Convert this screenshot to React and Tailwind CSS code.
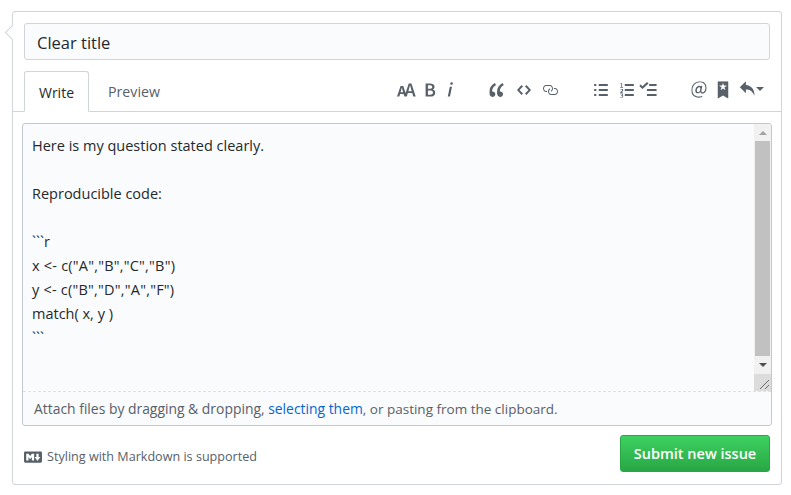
import React from "react";

const Icon = ({ w, h = 16, d, className = "" }) => (
  <svg width={w} height={h} viewBox={`0 0 ${w} 16`} className={`block fill-[#586069] ${className}`}>
    <path fillRule="evenodd" d={d} />
  </svg>
);

const textSize = "M13.62 9.08L12.1 3.66h-.06l-1.5 5.42h3.08zM5.7 10.13S4.68 6.52 4.53 6.02h-.08l-1.13 4.11H5.7zM17.31 14h-2.25l-.95-3.25h-4.07L9.09 14H6.84l-.69-2.33H2.87L2.17 14H0l3.3-9.59h2.5l2.17 6.34L10.86 2h2.52l3.93 12z";
const bold = "M1 2h3.83c2.48 0 4.3.75 4.3 2.95 0 1.14-.63 2.23-1.67 2.61v.06c1.33.3 2.3 1.23 2.3 2.86 0 2.39-1.97 3.52-4.61 3.52H1V2zm3.66 4.95c1.67 0 2.38-.66 2.38-1.69 0-1.17-.78-1.61-2.34-1.61H3.13v3.3h1.53zm.27 5.39c1.77 0 2.75-.64 2.75-1.98 0-1.27-.95-1.81-2.75-1.81h-1.8v3.8h1.8v-.01z";
const italic = "M2.81 5h1.98L3 14H1l1.81-9zm.36-2.7c0-.7.58-1.3 1.33-1.3.56 0 1.13.38 1.13 1.03 0 .75-.59 1.3-1.33 1.3-.58 0-1.13-.38-1.13-1.03z";
const quote = "M6.16 3.5C3.73 5.06 2.55 6.67 2.55 9.36c.16-.05.3-.05.44-.05 1.27 0 2.5.86 2.5 2.41 0 1.61-1.03 2.61-2.5 2.61-1.9 0-2.99-1.52-2.99-4.25 0-3.8 1.75-6.53 5.02-8.42L6.16 3.5zm7 0c-2.43 1.56-3.61 3.17-3.61 5.86.16-.05.3-.05.44-.05 1.27 0 2.5.86 2.5 2.41 0 1.61-1.03 2.61-2.5 2.61-1.89 0-2.98-1.52-2.98-4.25 0-3.8 1.75-6.53 5.02-8.42l1.14 1.84h-.01z";
const code = "M9.5 3L8 4.5 11.5 8 8 11.5 9.5 13 14 8 9.5 3zm-5 0L0 8l4.5 5L6 11.5 2.5 8 6 4.5 4.5 3z";
const link = "M4 9h1v1H4c-1.5 0-3-1.69-3-3.5S2.55 3 4 3h4c1.45 0 3 1.69 3 3.5 0 1.41-.91 2.72-2 3.25V8.59c.58-.45 1-1.27 1-2.09C10 5.22 8.98 4 8 4H4c-.98 0-2 1.22-2 2.5S3 9 4 9zm9-3h-1v1h1c1 0 2 1.22 2 2.5S13.98 12 13 12H9c-.98 0-2-1.22-2-2.5 0-.83.42-1.64 1-2.09V6.25c-1.09.53-2 1.84-2 3.25C6 11.31 7.55 13 9 13h4c1.45 0 3-1.69 3-3.5S14.5 6 13 6z";
const listUl = "M2 13c0 .59 0 1-.59 1H.59C0 14 0 13.59 0 13c0-.59 0-1 .59-1h.81c.59 0 .59.41.59 1H2zm2.59-9h6.81c.59 0 .59-.41.59-1 0-.59 0-1-.59-1H4.59C4 2 4 2.41 4 3c0 .59 0 1 .59 1zM1.41 7H.59C0 7 0 7.41 0 8c0 .59 0 1 .59 1h.81c.59 0 .59-.41.59-1 0-.59 0-1-.59-1h.01zm0-5H.59C0 2 0 2.41 0 3c0 .59 0 1 .59 1h.81c.59 0 .59-.41.59-1 0-.59 0-1-.59-1h.01zm10 5H4.59C4 7 4 7.41 4 8c0 .59 0 1 .59 1h6.81c.59 0 .59-.41.59-1 0-.59 0-1-.59-1h.01zm0 5H4.59C4 12 4 12.41 4 13c0 .59 0 1 .59 1h6.81c.59 0 .59-.41.59-1 0-.59 0-1-.59-1h.01z";
const listOl = "M12 13c0 .59 0 1-.59 1H4.6c-.59 0-.59-.41-.59-1s0-1 .59-1h6.81c.59 0 .59.41.59 1zM4.6 4h6.81c.59 0 .59-.41.59-1s0-1-.59-1H4.6c-.59 0-.59.41-.59 1s0 1 .59 1zm6.81 3H4.6c-.59 0-.59.41-.59 1s0 1 .59 1h6.81c.59 0 .59-.41.59-1s0-1-.59-1zM1 1.2h.7V5H2.6v.7H.2V5h.8V2h-.8v-.5zM.2 7h2.4v2L1 10.6h1.6v.4H.2V10l1.6-1.6V7.6H.2V7zM.2 11.6h2.4V15.6H.2V15h1.7v-1.1H.8v-.5h1.1v-1.2H.2v-.6z";
const tasklist = "M15.41 9H7.59C7 9 7 8.59 7 8c0-.59 0-1 .59-1h7.81c.59 0 .59.41.59 1 0 .59 0 1-.59 1h.01zM9.59 4C9 4 9 3.59 9 3c0-.59 0-1 .59-1h5.81c.59 0 .59.41.59 1 0 .59 0 1-.59 1H9.59zM0 3.91l1.41-1.3L3 4.2 7.09 0 8.5 1.41 3 6.91l-3-3zM7.59 12h7.81c.59 0 .59.41.59 1 0 .59 0 1-.59 1H7.59C7 14 7 13.59 7 13c0-.59 0-1 .59-1z";
const mention = "M6.58 15c1.25 0 2.52-.31 3.56-.94l-.42-.94c-.84.52-1.89.83-3.03.83-3.23 0-5.64-2.08-5.64-5.72 0-4.37 3.23-7.18 6.58-7.18 3.45 0 5.22 2.19 5.22 5.2 0 2.39-1.34 3.86-2.5 3.86-1.05 0-1.36-.73-1.05-2.19l.73-3.75H8.98l-.11.72c-.41-.63-.94-.83-1.56-.83-2.19 0-3.66 2.39-3.66 4.38 0 1.67.94 2.61 2.3 2.61.84 0 1.67-.53 2.3-1.25.11.94.94 1.45 1.98 1.45 1.67 0 3.77-1.67 3.77-5C14 2.61 11.59 0 7.83 0 3.66 0 0 3.33 0 8.33 0 12.71 2.92 15 6.58 15zm-.31-5c-.73 0-1.25-.41-1.25-1.45 0-1.67 1.05-3.02 2.09-3.02.63 0 1.05.31 1.05 1.25 0 1.56-.84 3.22-1.89 3.22z";
const bookmark = "M9 0H1C.27 0 0 .27 0 1v15l5-3.09L10 16V1c0-.73-.27-1-1-1zm-.78 4.25L6.36 5.61l.72 2.16c.06.22-.02.28-.2.17L5 6.6 3.12 7.94c-.19.11-.25.05-.2-.17l.72-2.16-1.86-1.36c-.17-.16-.14-.23.09-.23l2.3-.03.7-2.16h.25l.7 2.16 2.3.03c.23 0 .27.08.09.23h.01z";
const reply = "M6 3.5c3.92.44 8 3.125 8 10-2.312-5.062-4.75-6-8-6V11L.5 5.5 6 0v3.5z";
const markdown = "M14.85 3H1.15C.52 3 0 3.52 0 4.15v7.69C0 12.48.52 13 1.15 13h13.69c.64 0 1.15-.52 1.15-1.15v-7.7C16 3.52 15.48 3 14.85 3zM9 11H7V8L5.5 9.92 4 8v3H2V5h2l1.5 2L7 5h2v6zm2.99.5L9.5 8H11V5h2v3h1.5l-2.51 3.5z";

export default function App() {
  return (
    <div className="h-[495px] w-[791px] overflow-hidden bg-white pl-3 pt-[11px] font-['Open_Sans','Noto_Sans',sans-serif]">
      <div className="relative h-[474px] w-[770px] rounded-[3px] border border-[#d1d5da] bg-white">
        {/* little arrow on the left edge */}
        <div className="absolute left-[-6px] top-[15px] h-[11px] w-[11px] rotate-45 border-b border-l border-[#d1d5da] bg-white" />

        <div className="relative px-[11px] pt-[11px]">
          <div className="flex h-[37px] items-center rounded-[3px] border border-[#d1d5da] bg-[#fafbfc] pl-3 pt-[3px] text-[16.5px] text-[#24292e]">
            Clear title
          </div>
        </div>

        <div className="relative mt-[11px] flex h-[41px] items-end border-b border-[#d1d5da] pl-[11px]">
          <div className="mb-[-1px] flex h-[41px] w-[65px] items-center justify-center rounded-t-[3px] border border-b-white border-[#d1d5da] bg-white pt-[2px] text-[14px] text-[#24292e]">
            Write
          </div>
          <div className="flex h-[41px] w-[90px] items-center justify-center pt-[3px] text-[14.2px] text-[#586069]">
            Preview
          </div>
          <div className="ml-auto flex items-center self-center pb-[3px] pr-[17px]">
            <Icon w={18} d={textSize} className="origin-left scale-x-[1.08] scale-y-[1.1]" />
            <Icon w={10} d={bold} className="ml-[10px] scale-110" />
            <Icon w={6} d={italic} className="ml-[12px] scale-110" />
            <Icon w={14} d={quote} className="ml-[37px] scale-110" />
            <Icon w={14} d={code} className="ml-[13px]" />
            <Icon w={16} d={link} className="ml-[11px]" />
            <Icon w={12} d={listUl} className="ml-[37px] scale-x-[1.15]" />
            <Icon w={12} d={listOl} className="ml-[14px] scale-x-[1.15]" />
            <Icon w={16} d={tasklist} className="ml-[7px] scale-x-[1.1]" />
            <Icon w={14} d={mention} className="ml-[36px] scale-110" />
            <Icon w={10} d={bookmark} className="ml-[12px] scale-110" />
            <Icon w={14} d={reply} className="ml-[12px] scale-110" />
            <div className="ml-[2px] mt-[-1px] h-0 w-0 border-x-[4px] border-t-[4px] border-x-transparent border-t-[#586069]" />
          </div>
        </div>

        <div className="relative ml-[9px] mt-[11px] w-[750px] overflow-hidden rounded-[3px] border border-[#c3c8cf] bg-[#fafbfc]">
          <div className="flex h-[267px]">
            <div className="flex-1 pl-[9px] pt-[10px] text-[14.5px] leading-[24px] text-[#24292e]">
              <div className="h-[24px]">Here is my question stated clearly.</div>
              <div className="h-[24px]" />
              <div className="h-[24px]">Reproducible code:</div>
              <div className="h-[24px]" />
              <div className="h-[24px]">```r</div>
              <div className="h-[24px] tracking-[0.22px]">{'x <- c("A","B","C","B")'}</div>
              <div className="h-[24px] tracking-[0.22px]">{'y <- c("B","D","A","F")'}</div>
              <div className="h-[24px]">match( x, y )</div>
              <div className="h-[24px]">```</div>
            </div>
            <div className="flex w-[17px] flex-col bg-[#f1f1f1]">
              <div className="flex h-[17px] items-center justify-center">
                <div className="h-0 w-0 border-x-[4px] border-b-[4px] border-x-transparent border-b-[#a3a3a3]" />
              </div>
              <div className="mx-[1px] h-[215px] bg-[#c1c1c1]" />
              <div className="flex flex-1 items-center justify-center">
                <div className="h-0 w-0 border-x-[4px] border-t-[4px] border-x-transparent border-t-[#505050]" />
              </div>
              <div className="flex h-[17px] items-end justify-end bg-[#dcdcdc] pb-[1px] pr-[1px]">
                <svg width="11" height="11" viewBox="0 0 11 11" className="block stroke-[#6b6b6b]">
                  <path d="M1 10L10 1M6 10L10 6" fill="none" />
                </svg>
              </div>
            </div>
          </div>
          <div className="flex h-[34px] items-center border-t border-dashed border-[#dfe2e5] pl-[11px] pt-[2px] text-[13.9px] text-[#586069]">
            <span>
              Attach files by dragging &amp; dropping, <span className="text-[#0366d6]">selecting</span>{" "}
              <span className="text-[#0366d6]">them</span>
              <span className="text-[13.5px]">, or pasting from the clipboard.</span>
            </span>
          </div>
        </div>

        <div className="relative mt-[9px] flex items-center justify-between px-[11px]">
          <div className="flex items-center pt-[7px] text-[12.6px] text-[#586069]">
            <Icon w={16} d={markdown} className="mr-[5px] h-[18px] w-[18px]" />
            Styling with Markdown is supported
          </div>
          <button className="flex h-[37px] w-[150px] items-center justify-center rounded-[3px] border border-[#28a745] bg-gradient-to-b from-[#3ed160] to-[#28a745] text-[14.5px] font-semibold text-white">
            Submit new issue
          </button>
        </div>
      </div>
    </div>
  );
}
